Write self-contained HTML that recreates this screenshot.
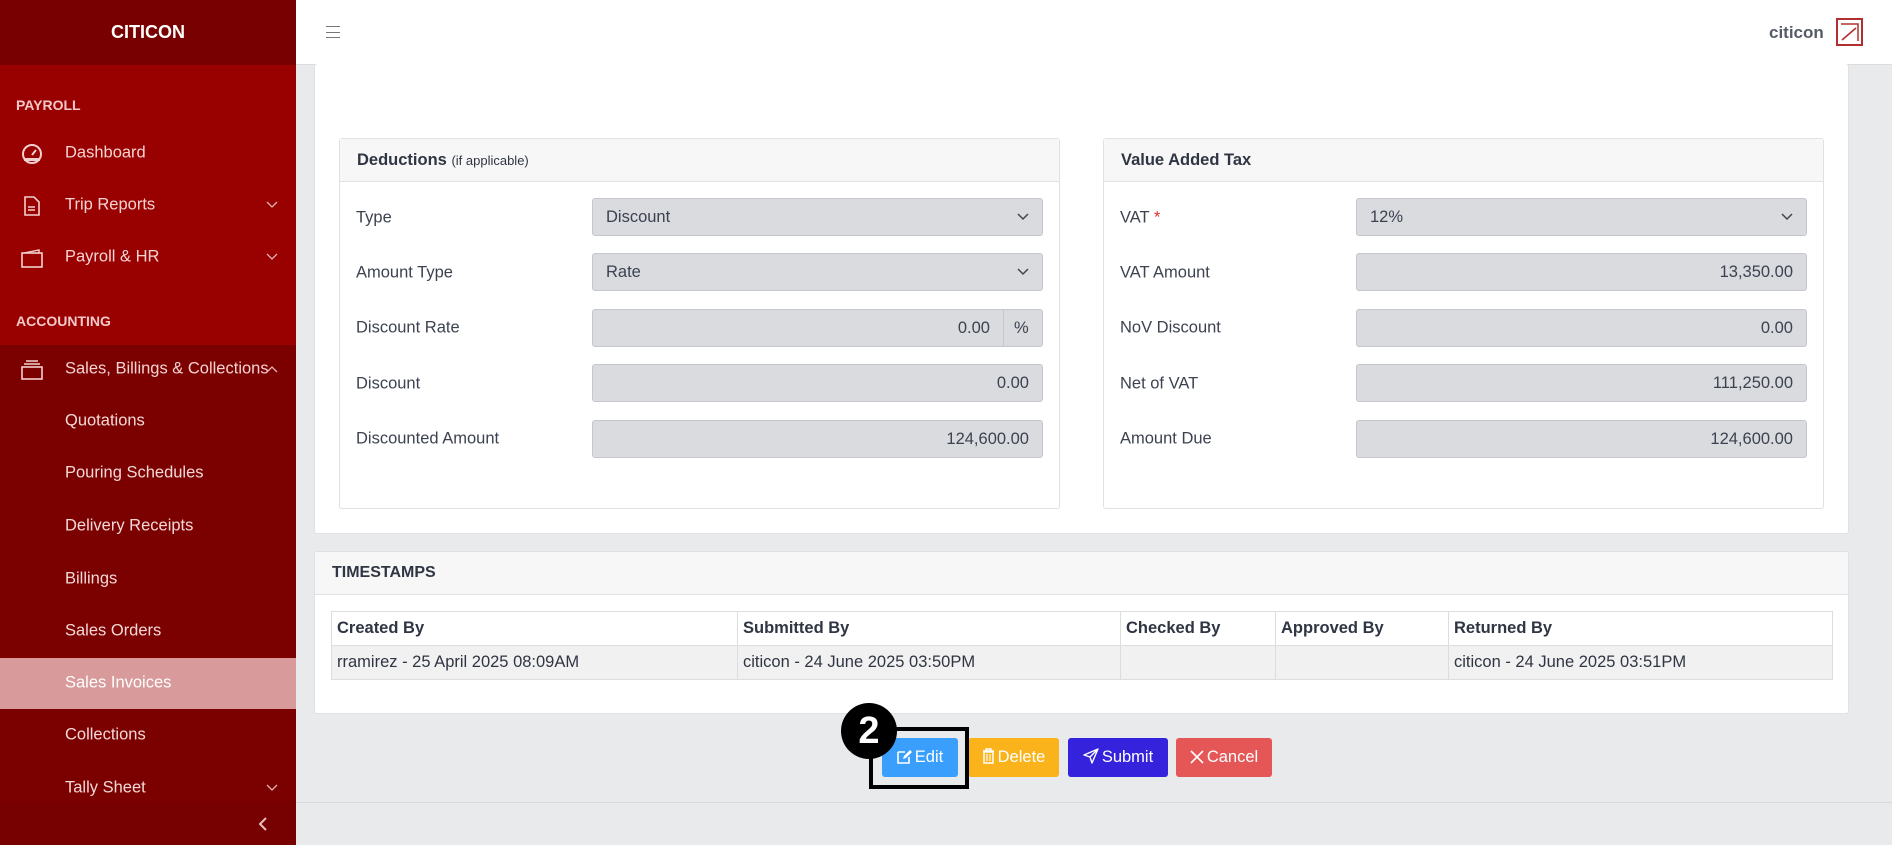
<!DOCTYPE html>
<html><head><meta charset="utf-8"><style>
*{box-sizing:border-box;margin:0;padding:0}
body{width:1892px;height:845px;overflow:hidden;background:#e9eaec;font-family:"Liberation Sans",sans-serif;color:#3c4250;position:relative;font-size:16px}
.abs{position:absolute}
#sb{left:0;top:0;width:296px;height:845px;background:#7b0000}
#sbtop{left:0;top:0;width:296px;height:65px;background:#780000;color:#fff;font-weight:bold;font-size:18px;text-align:center;line-height:65px}
#sbred{left:0;top:65px;width:296px;height:280px;background:#990000}
.sec{left:16px;color:#f3c9c9;font-weight:bold;font-size:14px}
.nav{left:65px;color:#f5d3d3;font-size:16.5px;transform:translateY(-50%)}
.chev{left:266px;transform:translateY(-50%)}
.sub{left:65px;color:#f3d8d8;font-size:16.5px;transform:translateY(-50%)}
#hdr{left:296px;top:0;width:1596px;height:65px;background:#fff;border-bottom:1px solid #dcdcdc}
.card{background:#fff;border:1px solid #dfe1e4;border-radius:3px}
.boxh{background:#f7f7f8;border-bottom:1px solid #dfe1e4;font-weight:bold;color:#2f3542;font-size:16.5px;padding-left:17px;line-height:42px;height:43px}
.lbl{font-size:16.5px;color:#3c4250;transform:translateY(-50%)}
.inp{background:#d9dbdf;border:1px solid #c4c7cc;border-radius:3px;height:38px;font-size:16.5px;line-height:36px;padding:0 13px;color:#3c4250}
.inp svg{float:right;margin-top:14px}
.r{text-align:right}
table{border-collapse:collapse;font-size:16.5px}
td{border:1px solid #dcdde0;height:34px;padding:0 5px;color:#2f3542}
.btn{height:39px;border-radius:3px;color:#fff;font-size:16.5px;line-height:39px;text-align:center}
.btn svg{vertical-align:-2px;margin-right:3px}
</style></head><body>
<div id="sb" class="abs"></div>
<div id="sbtop" class="abs">CITICON</div>
<div id="sbred" class="abs"></div>
<div class="abs" style="left:0;top:658px;width:296px;height:51px;background:#d89a9a"></div>
<div class="abs" style="left:0;top:802px;width:296px;height:43px;background:#770000"></div>
<svg class="abs" style="left:258px;top:817px" width="10" height="14"><path d="M8 1L2 7l6 6" fill="none" stroke="#e8c0c0" stroke-width="2"/></svg>
<div class="abs sec" style="top:97px">PAYROLL</div>
<div class="abs sec" style="top:313px">ACCOUNTING</div>
<svg class="abs" style="left:20px;top:144px" width="24" height="20" viewBox="0 0 24 20"><circle cx="12" cy="10" r="9" fill="none" stroke="#f3d0d0" stroke-width="2"/><path d="M4 14h16v3H4z" fill="#f3d0d0"/><path d="M12 11l4-5" stroke="#f3d0d0" stroke-width="2"/></svg>
<svg class="abs" style="left:24px;top:196px" width="16" height="20"><path d="M1 1h9l5 5v13H1z" fill="none" stroke="#f3d0d0" stroke-width="1.6"/><path d="M4 11h7M4 14h7" stroke="#f3d0d0" stroke-width="1.4"/></svg>
<svg class="abs" style="left:21px;top:248px" width="22" height="20"><rect x="1" y="5" width="20" height="14" fill="none" stroke="#f3d0d0" stroke-width="1.6"/><path d="M3 5l15-3v3" fill="none" stroke="#f3d0d0" stroke-width="1.4"/></svg>
<svg class="abs" style="left:21px;top:360px" width="22" height="20"><rect x="1" y="7" width="20" height="12" fill="none" stroke="#f3d0d0" stroke-width="1.6"/><path d="M3 4h16M5 1h12" stroke="#f3d0d0" stroke-width="1.4"/></svg>
<div class="abs nav" style="top:153px">Dashboard</div>
<div class="abs nav" style="top:205px">Trip Reports</div><svg class="abs chev" style="top:205px" width="12" height="8"><path d="M1 1l5 5 5-5" fill="none" stroke="#e6b3b3" stroke-width="1.3"/></svg>
<div class="abs nav" style="top:257px">Payroll &amp; HR</div><svg class="abs chev" style="top:257px" width="12" height="8"><path d="M1 1l5 5 5-5" fill="none" stroke="#e6b3b3" stroke-width="1.3"/></svg>
<div class="abs nav" style="top:369px">Sales, Billings &amp; Collections</div><svg class="abs chev" style="top:369px" width="12" height="8"><path d="M1 7l5-5 5 5" fill="none" stroke="#e6b3b3" stroke-width="1.3"/></svg>
<div class="abs sub" style="top:421px">Quotations</div>
<div class="abs sub" style="top:473px">Pouring Schedules</div>
<div class="abs sub" style="top:526px">Delivery Receipts</div>
<div class="abs sub" style="top:579px">Billings</div>
<div class="abs sub" style="top:631px">Sales Orders</div>
<div class="abs sub" style="top:683px;color:#fff">Sales Invoices</div>
<div class="abs sub" style="top:735px">Collections</div>
<div class="abs sub" style="top:788px">Tally Sheet</div><svg class="abs chev" style="top:788px" width="12" height="8"><path d="M1 1l5 5 5-5" fill="none" stroke="#e6b3b3" stroke-width="1.3"/></svg>

<div id="hdr" class="abs"></div>
<div class="abs" style="left:326px;top:26px;width:14px;height:12px;border-top:1px solid #777;border-bottom:1px solid #777"><div style="margin-top:5px;border-top:1px solid #777"></div></div>
<div class="abs" style="left:1769px;top:23px;font-weight:bold;color:#555c66;font-size:17px">citicon</div>
<svg class="abs" style="left:1836px;top:18px" width="28" height="29"><rect x="1" y="1" width="25" height="26" fill="#fff" stroke="#b03030" stroke-width="2"/><path d="M5 6h17v17" fill="none" stroke="#b03030" stroke-width="1.5"/><path d="M6 22l14-12" stroke="#b03030" stroke-width="1.6"/></svg>

<div class="abs card" style="left:314px;top:64px;width:1535px;height:470px;border-top:none"></div>
<div class="abs card" style="left:339px;top:138px;width:721px;height:371px"><div class="boxh">Deductions <span style="font-weight:normal;font-size:13px">(if applicable)</span></div></div>
<div class="abs card" style="left:1103px;top:138px;width:721px;height:371px"><div class="boxh">Value Added Tax</div></div>

<div class="abs lbl" style="left:356px;top:218px">Type</div>
<div class="abs lbl" style="left:356px;top:273px">Amount Type</div>
<div class="abs lbl" style="left:356px;top:328px">Discount Rate</div>
<div class="abs lbl" style="left:356px;top:384px">Discount</div>
<div class="abs lbl" style="left:356px;top:439px">Discounted Amount</div>
<div class="abs inp" style="left:592px;top:198px;width:451px">Discount<svg width="12" height="8"><path d="M1 1l5 5 5-5" fill="none" stroke="#444" stroke-width="1.5"/></svg></div>
<div class="abs inp" style="left:592px;top:253px;width:451px">Rate<svg width="12" height="8"><path d="M1 1l5 5 5-5" fill="none" stroke="#444" stroke-width="1.5"/></svg></div>
<div class="abs inp r" style="left:592px;top:309px;width:412px;border-radius:3px 0 0 3px">0.00</div>
<div class="abs inp" style="left:1003px;top:309px;width:40px;border-radius:0 3px 3px 0;padding:0 10px">%</div>
<div class="abs inp r" style="left:592px;top:364px;width:451px">0.00</div>
<div class="abs inp r" style="left:592px;top:420px;width:451px">124,600.00</div>

<div class="abs lbl" style="left:1120px;top:218px">VAT <span style="color:#d33">*</span></div>
<div class="abs lbl" style="left:1120px;top:273px">VAT Amount</div>
<div class="abs lbl" style="left:1120px;top:328px">NoV Discount</div>
<div class="abs lbl" style="left:1120px;top:384px">Net of VAT</div>
<div class="abs lbl" style="left:1120px;top:439px">Amount Due</div>
<div class="abs inp" style="left:1356px;top:198px;width:451px">12%<svg width="12" height="8"><path d="M1 1l5 5 5-5" fill="none" stroke="#444" stroke-width="1.5"/></svg></div>
<div class="abs inp r" style="left:1356px;top:253px;width:451px">13,350.00</div>
<div class="abs inp r" style="left:1356px;top:309px;width:451px">0.00</div>
<div class="abs inp r" style="left:1356px;top:364px;width:451px">111,250.00</div>
<div class="abs inp r" style="left:1356px;top:420px;width:451px">124,600.00</div>

<div class="abs card" style="left:314px;top:551px;width:1535px;height:163px"><div class="boxh" style="font-size:16px">TIMESTAMPS</div></div>
<table class="abs" style="left:331px;top:611px;width:1502px">
<tr><td style="width:406px;font-weight:bold">Created By</td><td style="width:383px;font-weight:bold">Submitted By</td><td style="width:155px;font-weight:bold">Checked By</td><td style="width:173px;font-weight:bold">Approved By</td><td style="font-weight:bold">Returned By</td></tr>
<tr style="background:#f1f1f2"><td>rramirez - 25 April 2025 08:09AM</td><td>citicon - 24 June 2025 03:50PM</td><td></td><td></td><td>citicon - 24 June 2025 03:51PM</td></tr>
</table>

<div class="abs" style="left:296px;top:802px;width:1596px;border-top:1px solid #d8d9dc"></div>
<div class="abs btn" style="left:882px;top:738px;width:76px;background:#3a9ffc"><svg width="15" height="15"><path d="M1 3h7M1 3v11h11V8" fill="none" stroke="#fff" stroke-width="1.6"/><path d="M6 10l1-3 6-6 2 2-6 6z" fill="#fff"/></svg>Edit</div>
<div class="abs btn" style="left:968px;top:738px;width:91px;background:#fbb31b"><svg width="13" height="16"><path d="M1 3h11M4 3V1h5v2M2 4h9v11H2z" fill="none" stroke="#fff" stroke-width="1.5"/><path d="M5 6v7M8 6v7" stroke="#fff" stroke-width="1.2"/></svg>Delete</div>
<div class="abs btn" style="left:1068px;top:738px;width:100px;background:#3422dc"><svg width="16" height="16"><path d="M15 1L1 7l6 2 2 6z M7 9l8-8" fill="none" stroke="#fff" stroke-width="1.4" stroke-linejoin="round"/></svg>Submit</div>
<div class="abs btn" style="left:1176px;top:738px;width:96px;background:#e55757"><svg width="14" height="14"><path d="M1 1l12 12M13 1L1 13" stroke="#fff" stroke-width="1.6"/></svg>Cancel</div>
<div class="abs" style="left:869px;top:727px;width:100px;height:62px;border:4px solid #000"></div>
<div class="abs" style="left:841px;top:703px;width:56px;height:56px;border-radius:50%;background:#000;color:#fff;font-weight:bold;font-size:38px;text-align:center;line-height:56px">2</div>
</body></html>
